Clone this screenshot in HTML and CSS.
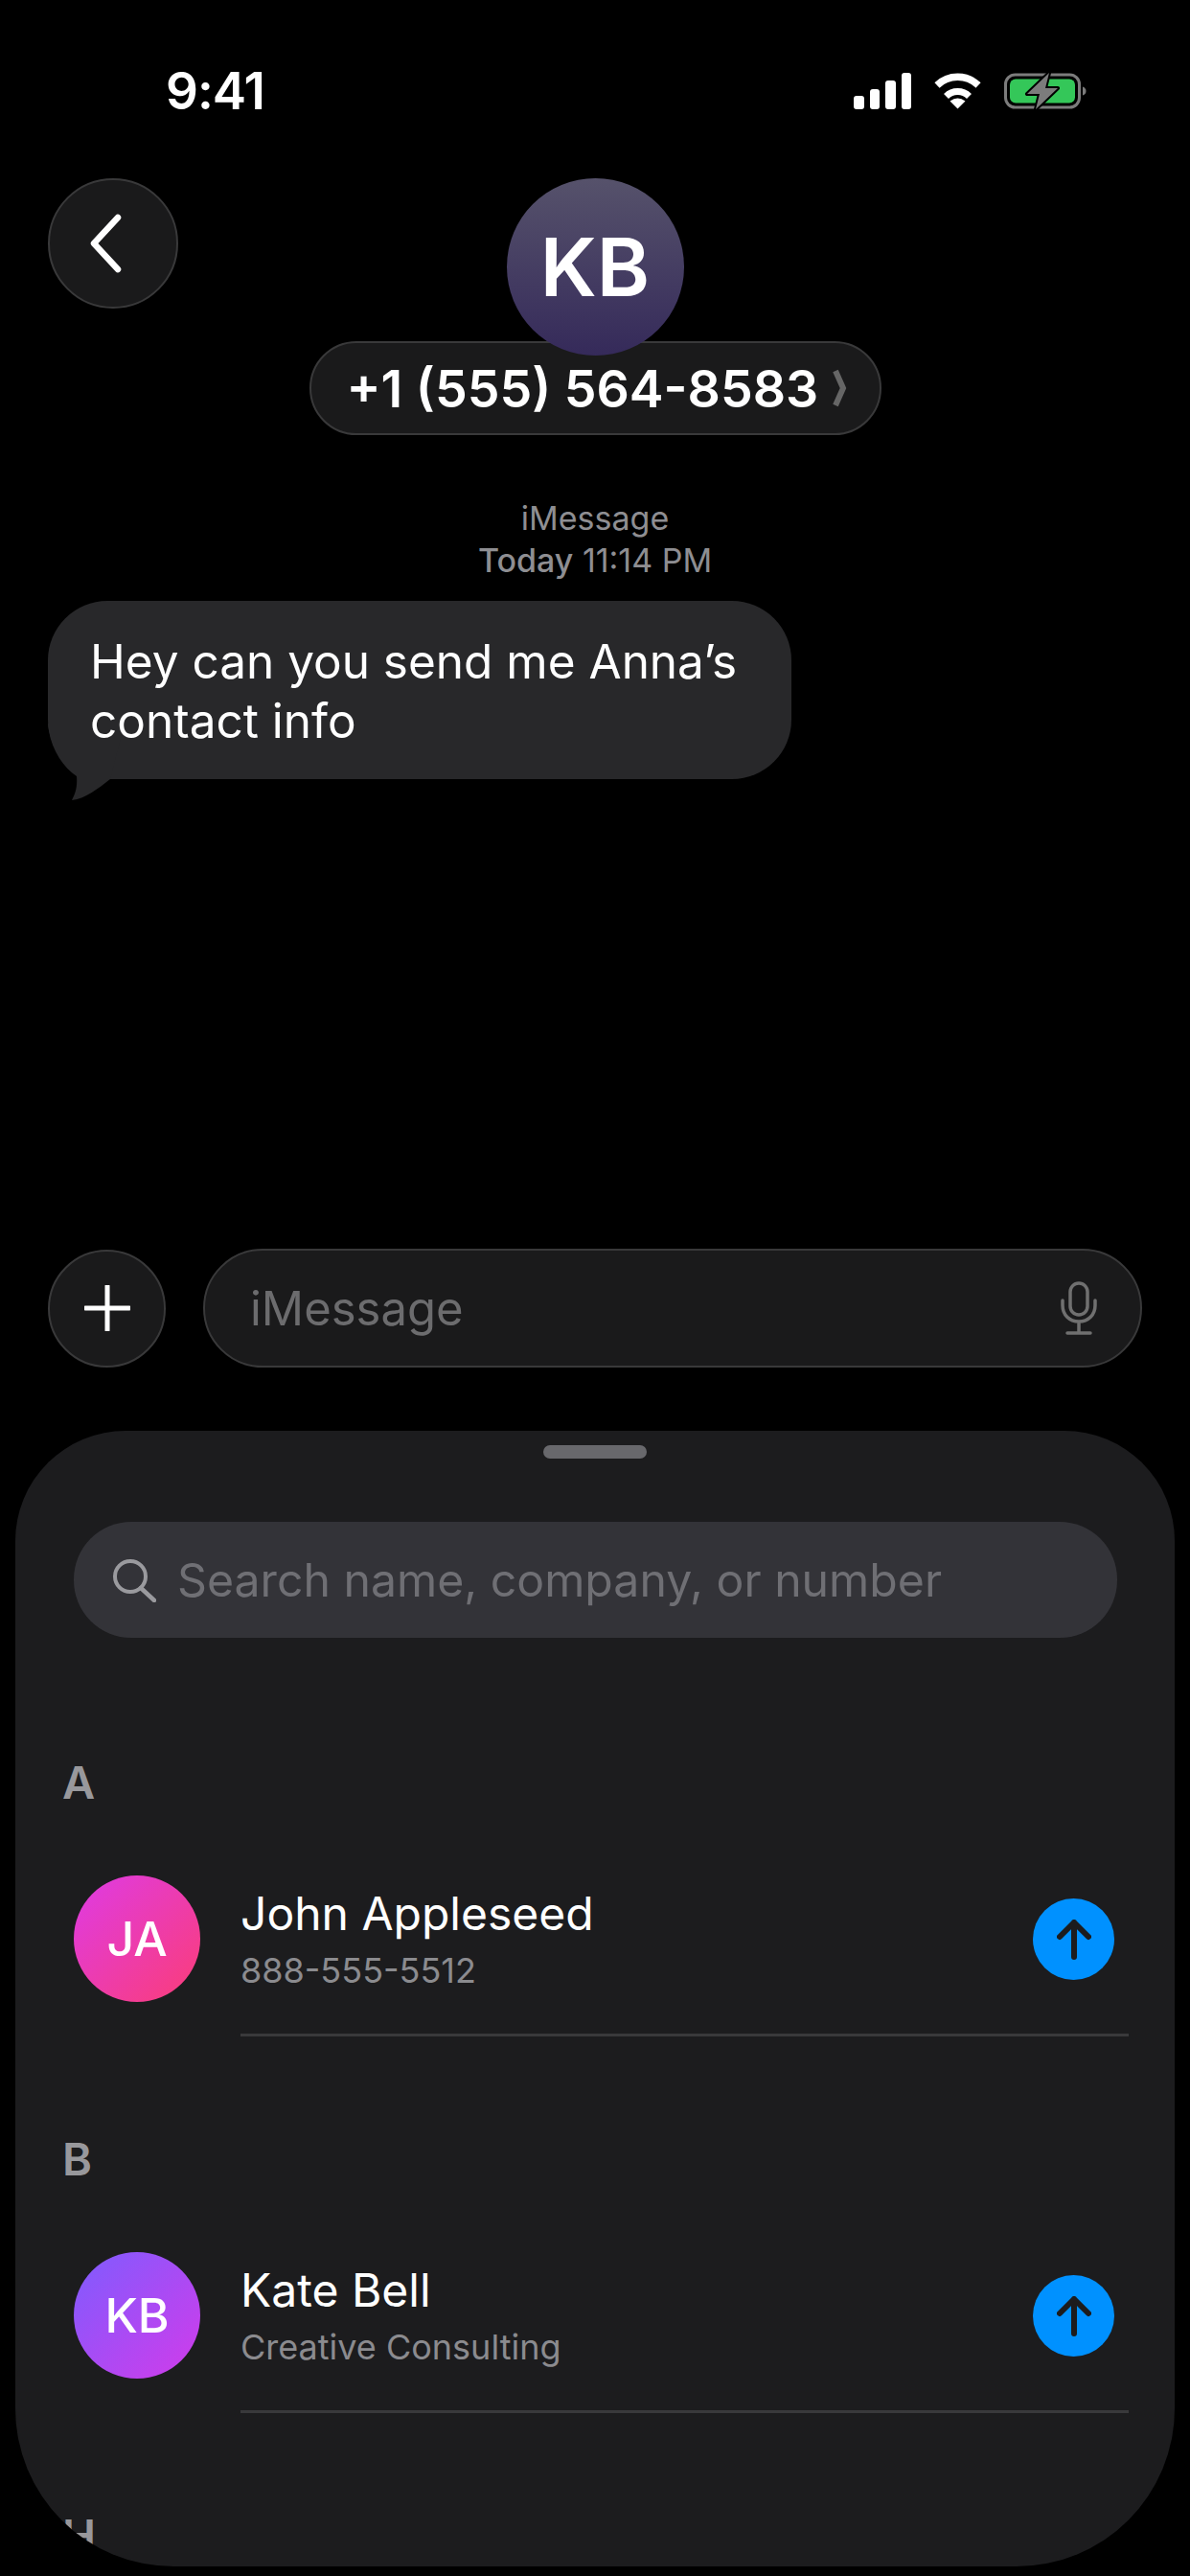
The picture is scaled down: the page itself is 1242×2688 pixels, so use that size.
FILE: index.html
```html
<!DOCTYPE html>
<html lang="en">
<head>
    <meta charset="UTF-8">
    <meta name="viewport" content="width=device-width, initial-scale=1.0">
    <title>Messages</title>
    <link rel="stylesheet" href="styles.css">
</head>
<body>
    <div class="status-bar">
        <span class="time">9:41</span>
        <div class="status-icons">
            <div class="signal">
                <span class="bar bar1"></span>
                <span class="bar bar2"></span>
                <span class="bar bar3"></span>
                <span class="bar bar4"></span>
            </div>
            <svg class="wifi" width="51" height="38" viewBox="0 0 51 38">
                <path d="M4 13A31 31 0 0 1 47 13" fill="none" stroke="#fff" stroke-width="7.5"/>
                <path d="M13.5 24.5A17 17 0 0 1 37.5 24.5" fill="none" stroke="#fff" stroke-width="7"/>
                <path d="M25.5 37.5L17.5 29.5Q25.5 23.5 33.5 29.5Z" fill="#fff"/>
            </svg>
            <svg class="battery" width="86" height="40" viewBox="0 0 86 40">
                <rect x="1.5" y="3" width="77" height="34" rx="10" fill="none" stroke="#7c7c7c" stroke-width="3"/>
                <rect x="6" y="7.5" width="68" height="25" rx="6" fill="#34c759"/>
                <path d="M82 15.500C84.500 16.500 85.500 18 85.500 20C85.500 22 84.500 23.500 82 24.500Z" fill="#7c7c7c"/>
                <path d="M47 1L24 23H37L33 39L56 17H43Z" fill="#7c7c7c" stroke="#000" stroke-width="4" stroke-linejoin="round" paint-order="stroke"/>
            </svg>
        </div>
    </div>

    <div class="header">
        <button class="round-btn back-btn">
            <svg width="40" height="64" viewBox="0 0 40 64">
                <path d="M32 5L7 32L32 59" fill="none" stroke="#fff" stroke-width="6.500" stroke-linecap="round" stroke-linejoin="round"/>
            </svg>
        </button>
        <div class="contact">
            <div class="contact-avatar">KB</div>
            <div class="contact-pill">
                <span>+1 (555) 564-8583</span>
                <svg width="16" height="40" viewBox="0 0 16 40">
                    <path d="M4 2L12 20L4 38" fill="none" stroke="#666" stroke-width="6"/>
                </svg>
            </div>
        </div>
    </div>

    <div class="thread">
        <div class="meta">
            <div>iMessage</div>
            <div><b>Today</b> 11:14 PM</div>
        </div>
        <div class="bubble">
            <svg class="bubble-tail" width="80" height="80" viewBox="0 0 80 80">
                <path d="M0 0C2 25 15 45 30 55C31 68 28 74 25 80C40 78 52 68 65 58L80 0Z" fill="#28282a"/>
            </svg>
            <span class="bubble-text">Hey can you send me Anna’s<br>contact info</span>
        </div>
    </div>

    <div class="composer">
        <button class="round-btn plus-btn">
            <svg width="48" height="48" viewBox="0 0 48 48">
                <path d="M24 1V47M1 24H47" stroke="#fff" stroke-width="5" stroke-linecap="round"/>
            </svg>
        </button>
        <div class="message-input">
            <span>iMessage</span>
            <svg width="38" height="56" viewBox="0 0 38 56">
                <rect x="10" y="2" width="18" height="33" rx="9" fill="none" stroke="#707070" stroke-width="3.500"/>
                <path d="M2 20V25C2 35 9 42 19 42C29 42 36 35 36 25V20M19 42V53M7 54H31" fill="none" stroke="#707070" stroke-width="3.500" stroke-linecap="round"/>
            </svg>
        </div>
    </div>

    <div class="sheet">
        <div class="handle"></div>
        <div class="search">
            <svg width="46" height="46" viewBox="0 0 46 46">
                <circle cx="19" cy="19" r="16" fill="none" stroke="#9a9a9e" stroke-width="4"/>
                <path d="M30 31L44 44" stroke="#9a9a9e" stroke-width="4.500" stroke-linecap="round"/>
            </svg>
            <span>Search name, company, or number</span>
        </div>

        <div class="section-letter">A</div>
        <div class="contact-row">
            <div class="avatar avatar-ja">JA</div>
            <div class="row-body">
                <div class="row-text">
                    <div class="name">John Appleseed</div>
                    <div class="detail">888-555-5512</div>
                </div>
                <div class="send-btn">
                    <svg width="36" height="42" viewBox="0 0 36 42">
                        <path d="M18 39V3M3 18L18 3L33 18" fill="none" stroke="#1c1c1e" stroke-width="6" stroke-linecap="round" stroke-linejoin="round"/>
                    </svg>
                </div>
            </div>
        </div>

        <div class="section-letter">B</div>
        <div class="contact-row">
            <div class="avatar avatar-kb">KB</div>
            <div class="row-body">
                <div class="row-text">
                    <div class="name">Kate Bell</div>
                    <div class="detail">Creative Consulting</div>
                </div>
                <div class="send-btn">
                    <svg width="36" height="42" viewBox="0 0 36 42">
                        <path d="M18 39V3M3 18L18 3L33 18" fill="none" stroke="#1c1c1e" stroke-width="6" stroke-linecap="round" stroke-linejoin="round"/>
                    </svg>
                </div>
            </div>
        </div>

        <div class="section-letter">H</div>
    </div>
</body>
</html>
```

FILE: styles.css
```css
* {
    box-sizing: border-box;
}
html, body {
    margin: 0;
    height: 2688px;
    overflow: hidden;
}
body {
    display: flex;
    flex-direction: column;
    background: #000;
    color: #fff;
    font-family: Inter, "Liberation Sans", sans-serif;
}
button {
    padding: 0;
    font: inherit;
    color: inherit;
}

/* status bar */
.status-bar {
    display: flex;
    justify-content: space-between;
    align-items: center;
    height: 186px;
    padding: 4px 108px 0 173px;
    flex-shrink: 0;
}
.time {
    font-size: 53px;
    font-weight: 600;
    letter-spacing: -1px;
}
.status-icons {
    display: flex;
    align-items: center;
    gap: 23px;
}
.signal {
    display: flex;
    align-items: flex-end;
    gap: 6px;
    height: 38px;
}
.bar {
    width: 10.500px;
    background: #fff;
    border-radius: 3px;
}
.bar1 { height: 14px; }
.bar2 { height: 21px; }
.bar3 { height: 30px; }
.bar4 { height: 38px; }

/* header */
.header {
    position: relative;
    display: flex;
    justify-content: center;
    flex-shrink: 0;
}
.round-btn {
    display: flex;
    align-items: center;
    justify-content: center;
    border-radius: 50%;
    background: #1a1a1b;
    border: 2px solid #39393a;
}
.back-btn {
    position: absolute;
    left: 50px;
    top: 0;
    width: 136px;
    height: 136px;
    padding-right: 14px;
}
.contact {
    display: flex;
    flex-direction: column;
    align-items: center;
}
.contact-avatar {
    position: relative;
    z-index: 1;
    display: flex;
    align-items: center;
    justify-content: center;
    width: 185px;
    height: 185px;
    border-radius: 50%;
    background: linear-gradient(#56526b, #352a5a);
    font-size: 84px;
    font-weight: 600;
}
.contact-pill {
    display: flex;
    align-items: center;
    gap: 14px;
    width: 597px;
    height: 98px;
    margin-top: -15px;
    padding-left: 37px;
    border-radius: 49px;
    background: #1a1a1b;
    border: 2px solid #39393a;
    font-size: 53.700px;
    font-weight: 600;
}

/* messages */
.thread {
    flex: 1;
    padding: 65px 50px 0;
}
.meta {
    text-align: center;
    font-size: 34px;
    line-height: 44px;
    color: #8e8e92;
}
.meta b {
    font-weight: 500;
}
.bubble {
    position: relative;
    width: 776px;
    height: 186px;
    margin-top: 20px;
    padding: 32px 44px;
    border-radius: 62px;
    background: #28282a;
    font-size: 49.500px;
    line-height: 62px;
}
.bubble-tail {
    position: absolute;
    left: 0;
    bottom: -22px;
}
.bubble-text {
    position: relative;
}

/* input row */
.composer {
    display: flex;
    align-items: center;
    gap: 39px;
    padding: 0 50px;
    margin-bottom: 66px;
    flex-shrink: 0;
}
.plus-btn {
    width: 123px;
    height: 123px;
}
.message-input {
    flex: 1;
    display: flex;
    align-items: center;
    justify-content: space-between;
    height: 124px;
    padding: 0 45px 0 47px;
    border-radius: 62px;
    background: #1a1a1b;
    border: 2px solid #39393a;
    font-size: 49px;
    color: #6c6c6e;
}

/* contact picker sheet */
.sheet {
    flex-shrink: 0;
    height: 1185px;
    margin: 0 16px 10px;
    overflow: hidden;
    border-radius: 115px 115px 165px 165px;
    background: #1c1c1e;
}
.handle {
    width: 108px;
    height: 14px;
    margin: 15px auto 0;
    border-radius: 7px;
    background: #68686c;
}
.search {
    display: flex;
    align-items: center;
    gap: 22px;
    height: 121px;
    margin: 66px 60px 0 61px;
    padding-left: 40px;
    border-radius: 60px;
    background: #333338;
    font-size: 48.200px;
    color: #6f6f74;
}
.section-letter {
    margin: 108px 0 0 49px;
    height: 40px;
    line-height: 40px;
    font-size: 47px;
    font-weight: 600;
    color: #98989c;
}
.search + .section-letter {
    margin-top: 131px;
}
.contact-row {
    display: flex;
    margin: 77px 48px 0 61px;
    height: 168px;
}
.avatar {
    display: flex;
    align-items: center;
    justify-content: center;
    width: 132px;
    height: 132px;
    flex-shrink: 0;
    border-radius: 50%;
    font-size: 50px;
    font-weight: 500;
}
.avatar-ja {
    background: linear-gradient(135deg, #de3be6, #fb3d77);
}
.avatar-kb {
    background: linear-gradient(135deg, #7e5cff, #d23bea);
}
.row-body {
    flex: 1;
    display: flex;
    align-items: flex-start;
    justify-content: space-between;
    margin-left: 42px;
    padding-right: 15px;
    border-bottom: 3px solid #39393b;
}
.name {
    font-size: 48px;
    line-height: 56px;
    margin-top: 12px;
}
.detail {
    font-size: 36px;
    line-height: 44px;
    margin-top: 9px;
    color: #8b8b8f;
}
.send-btn {
    display: flex;
    align-items: center;
    justify-content: center;
    width: 85px;
    height: 85px;
    margin-top: 24px;
    border-radius: 50%;
    background: #0091ff;
}
```
